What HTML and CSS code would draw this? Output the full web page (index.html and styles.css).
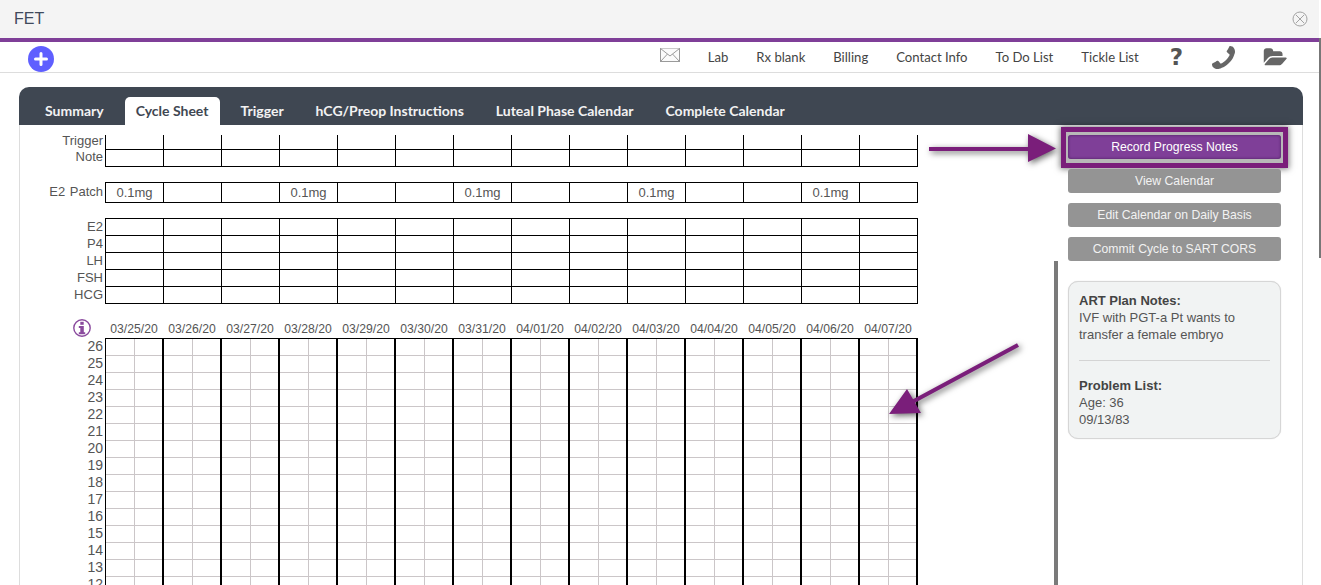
FILE: index.html
```html
<!DOCTYPE html>
<html lang="en">
<head>
<meta charset="utf-8">
<title>FET</title>
<link rel="stylesheet" href="styles.css">
</head>
<body>
<header class="titlebar">
  <h1 class="title">FET</h1>
  <svg class="close-icon" viewBox="0 0 16 16" width="16" height="16"><circle cx="8" cy="8" r="7" /><path d="M4 4l8 8M12 4l-8 8" /></svg>
</header>
<nav class="toolbar">
  <span class="add-btn"><svg viewBox="0 0 26 26" width="26" height="26"><circle cx="13" cy="13" r="13" class="add-bg"/><path d="M13 7.500v11M7.500 13h11" class="add-plus"/></svg></span>
  <div class="toolbar-links">
    <svg class="mail-icon" viewBox="0 0 20 14" width="20" height="14"><rect x="0.5" y="0.5" width="19" height="13"/><path d="M0.5 0.5L10 8l9.500-7.500M0.500 13.500L7.500 6M19.500 13.500L12.500 6"/></svg>
    <a class="tool-link">Lab</a>
    <a class="tool-link">Rx blank</a>
    <a class="tool-link">Billing</a>
    <a class="tool-link">Contact Info</a>
    <a class="tool-link">To Do List</a>
    <a class="tool-link">Tickle List</a>
    <span class="help">?</span>
    <svg class="phone-icon" viewBox="0 0 1408 1408" width="23" height="23"><path d="M1408 1112q0 27-10 70.500t-21 68.500q-21 50-122 106-94 51-186 51-27 0-53-3.500t-57.500-12.500-47-14.500-55.500-20.500-49-18q-98-35-175-83-127-79-264-216t-216-264q-48-77-83-175-3-9-18-49t-20.500-55.500-14.500-47-12.500-57.500-3.500-53q0-92 51-186 56-101 106-122 25-11 68.500-21t70.500-10q14 0 21 3 18 6 53 76 11 19 30 54t35 63.500 31 53.500q3 4 17.500 25t21.500 35.500 7 28.500q0 20-28.500 50t-62 55-62 53-28.500 46q0 9 5 22.500t8.500 20.500 14 24 11.500 19q76 137 174 235t235 174q2 1 19 11.500t24 14 20.500 8.500 22.500 5q18 0 46-28.500t53-62 55-62 50-28.500q14 0 28.500 7t35.500 21.500 25 17.500q25 15 53.500 31t63.500 35 54 30q70 35 76 53 3 7 3 21z"/></svg>
    <svg class="folder-icon" viewBox="0 0 2048 1536" width="25" height="19"><path d="M1943 824q0 31-31 66l-336 396q-43 51-120.500 86.500t-143.500 35.500h-1088q-34 0-60.500-13t-26.500-43q0-31 31-66l336-396q43-51 120.500-86.500t143.500-35.500h1088q34 0 60.500 13t26.500 43zm-343-344v160h-832q-94 0-197 47.500t-164 119.500l-337 396-5 6q0-4-.5-12.500t-.5-12.500v-960q0-92 66-158t158-66h320q92 0 158 66t66 158v32h544q92 0 158 66t66 158z"/></svg>
  </div>
</nav>
<span class="scroll-thumb"></span>
<main class="panel">
  <div class="tabs">
    <a class="tab">Summary</a>
    <a class="tab tab-active">Cycle Sheet</a>
    <a class="tab">Trigger</a>
    <a class="tab">hCG/Preop Instructions</a>
    <a class="tab">Luteal Phase Calendar</a>
    <a class="tab">Complete Calendar</a>
  </div>
  <div class="panel-body">
    <section class="sheet">
      <table class="cycle-table table-trigger">
        <tr class="row-short"><th>Trigger</th><td></td><td></td><td></td><td></td><td></td><td></td><td></td><td></td><td></td><td></td><td></td><td></td><td></td><td></td></tr>
        <tr><th>Note</th><td></td><td></td><td></td><td></td><td></td><td></td><td></td><td></td><td></td><td></td><td></td><td></td><td></td><td></td></tr>
      </table>
      <table class="cycle-table table-patch">
        <tr class="row-first row-tall"><th>E2 Patch</th><td>0.1mg</td><td></td><td></td><td>0.1mg</td><td></td><td></td><td>0.1mg</td><td></td><td></td><td>0.1mg</td><td></td><td></td><td>0.1mg</td><td></td></tr>
      </table>
      <table class="cycle-table table-labs">
        <tr class="row-first"><th>E2</th><td></td><td></td><td></td><td></td><td></td><td></td><td></td><td></td><td></td><td></td><td></td><td></td><td></td><td></td></tr>
        <tr><th>P4</th><td></td><td></td><td></td><td></td><td></td><td></td><td></td><td></td><td></td><td></td><td></td><td></td><td></td><td></td></tr>
        <tr><th>LH</th><td></td><td></td><td></td><td></td><td></td><td></td><td></td><td></td><td></td><td></td><td></td><td></td><td></td><td></td></tr>
        <tr><th>FSH</th><td></td><td></td><td></td><td></td><td></td><td></td><td></td><td></td><td></td><td></td><td></td><td></td><td></td><td></td></tr>
        <tr><th>HCG</th><td></td><td></td><td></td><td></td><td></td><td></td><td></td><td></td><td></td><td></td><td></td><td></td><td></td><td></td></tr>
      </table>
      <div class="chart">
        <div class="chart-corner">
          <svg class="info-icon" viewBox="0 0 18 18" width="18" height="18"><circle cx="9" cy="9" r="8.200"/><rect class="info-fill" x="7.300" y="2.800" width="3.400" height="3"/><path class="info-fill" d="M5.800 7h5v6.300H12.200V15.300H5.800v-2h1.500V9H5.800z"/></svg>
        </div>
        <div class="dates">
          <span>03/25/20</span><span>03/26/20</span><span>03/27/20</span><span>03/28/20</span><span>03/29/20</span><span>03/30/20</span><span>03/31/20</span><span>04/01/20</span><span>04/02/20</span><span>04/03/20</span><span>04/04/20</span><span>04/05/20</span><span>04/06/20</span><span>04/07/20</span>
        </div>
        <div class="ticks">
          <span>26</span><span>25</span><span>24</span><span>23</span><span>22</span><span>21</span><span>20</span><span>19</span><span>18</span><span>17</span><span>16</span><span>15</span><span>14</span><span>13</span><span>12</span>
        </div>
        <div class="plot"></div>
      </div>
    </section>
    <aside class="side">
      <div class="actions">
        <a class="action action-record">Record Progress Notes</a>
        <a class="action">View Calendar</a>
        <a class="action">Edit Calendar on Daily Basis</a>
        <a class="action">Commit Cycle to SART CORS</a>
      </div>
      <div class="notes">
        <div class="note-card">
          <p class="note-block"><strong>ART Plan Notes:</strong><br>IVF with PGT-a Pt wants to transfer a female embryo</p>
          <hr class="note-rule">
          <p class="note-block"><strong>Problem List:</strong><br>Age: 36<br>09/13/83</p>
        </div>
      </div>
    </aside>
    <svg class="callouts" viewBox="0 0 1284 498" width="1284" height="498">
      <path class="callout" d="M910 22H1009V9L1037 23.500 1009 37V26H910z"/>
      <path class="callout" d="M998 218.200L1000 221.800 896 277.800 902 288 870 289 888 264 894 274.200z"/>
    </svg>
  </div>
</main>
</body>
</html>
```
FILE: styles.css
```css
* { box-sizing: border-box; }
html, body { margin: 0; height: 585px; overflow: hidden; background: #fff; }
body { font-family: "Liberation Sans", Arial, sans-serif; color: #555; position: relative; }

.titlebar {
  height: 42px;
  background: #f4f4f4;
  border-bottom: 4px solid #7f3f98;
  display: flex;
  align-items: center;
  justify-content: space-between;
  padding: 0 11px 1px 14px;
  margin-right: 2px;
}
.title { margin: 1px 0 0; font-size: 16px; font-weight: 400; color: #3f4a5c; }
.close-icon circle, .close-icon path { fill: none; stroke: #a2a2a2; stroke-width: 1; }

.toolbar {
  height: 31px;
  border-bottom: 1px solid #ddd;
  display: flex;
  align-items: center;
  justify-content: space-between;
  padding: 0 33px 0 28px;
}
.add-btn { display: flex; margin-top: 3px; }
.add-bg { fill: #5f5fff; }
.add-plus { stroke: #fff; stroke-width: 3; stroke-linecap: round; fill: none; }
.toolbar-links { display: flex; align-items: center; gap: 28px; }
.tool-link { font-family: Lato, sans-serif; font-size: 13.1px; color: #444; }
.mail-icon { margin-bottom: 4px; }
.mail-icon rect, .mail-icon path { fill: #fafafa; stroke: #9a9a9a; stroke-width: 1; }
.help { font-family: "DejaVu Sans", sans-serif; font-weight: 700; font-size: 23px; color: #555; line-height: 24px; margin-left: 3px; }
.phone-icon { fill: #666; transform: scaleX(-1); margin-left: 1px; }
.folder-icon { fill: #666; }

.scroll-thumb { position: absolute; top: 38px; right: 0; width: 2px; height: 220px; background: #777; }

.panel { margin: 14px 18px 0 19px; }
.tabs {
  height: 38px;
  background: #3f4752;
  border-radius: 10px 10px 0 0;
  display: flex;
  align-items: flex-end;
  gap: 10px;
  padding-left: 15px;
}
.tab {
  height: 28px;
  padding: 0 11px 2px;
  display: flex;
  align-items: center;
  font-family: Lato, sans-serif;
  font-weight: 700;
  font-size: 14px;
  color: #f2f2f2;
  border-radius: 5px 5px 0 0;
}
.tab-active { background: #fff; color: #3f4752; }

.panel-body {
  position: relative;
  display: flex;
  height: 498px;
  padding: 10px 0 0 0;
  border-left: 1px solid #ddd;
  border-right: 1px solid #ddd;
}
.sheet { width: 1034px; flex: none; }

.cycle-table { border-spacing: 0; table-layout: fixed; width: 898px; font-size: 13px; }
.table-patch, .table-labs { margin-top: 15px; }
.cycle-table th { width: 85px; padding: 0 2px 0 0; font-weight: 400; text-align: right; line-height: 14px; vertical-align: top; }
.cycle-table td {
  width: 58px;
  height: 17px;
  padding: 0;
  border-left: 1px solid #000;
  border-bottom: 1px solid #000;
  text-align: center;
  line-height: 14px;
}
.cycle-table td:last-child { width: 59px; border-right: 1px solid #000; }
.row-short td { height: 15px; }
.row-short th { line-height: 12px; }
.table-labs th { padding-top: 1px; }
.row-first td { border-top: 1px solid #000; height: 18px; }
.table-labs .row-first th { padding-top: 2px; }
.row-tall td { height: 21px; }
.row-tall th { padding-top: 3px; word-spacing: 1px; }

.chart { display: grid; grid-template-columns: 85px 813px; grid-template-rows: 34px auto; }
.chart-corner { display: flex; justify-content: flex-end; align-items: flex-end; padding: 0 14px 1px 0; }
.info-icon circle { fill: none; stroke: #8a4a9e; stroke-width: 1.400; }
.info-fill { fill: #8a4a9e; }
.dates { display: grid; grid-template-columns: repeat(14, 58px); align-items: end; font-size: 12.2px; text-align: center; line-height: 14px; padding: 0 0 2px 0; }
.ticks { display: flex; flex-direction: column; text-align: right; font-size: 14px; padding-right: 2px; }
.ticks span { height: 17px; line-height: 17px; }
.plot {
  background-image:
    linear-gradient(#000 1px, transparent 1px),
    linear-gradient(90deg, #000 2px, transparent 2px),
    linear-gradient(90deg, transparent 29px, #cbc6c8 29px, #cbc6c8 30px, transparent 30px),
    linear-gradient(0deg, #cbc6c8 1px, transparent 1px);
  background-size: 100% 100%, 58px 100%, 58px 100%, 100% 17px;
  background-position: 0 0, -1px 0, 0 0, 0 1px;
}

.side { flex: 1; display: flex; flex-direction: column; isolation: isolate; }
.actions { display: flex; flex-direction: column; gap: 10px; padding-left: 14px; }
.action {
  position: relative;
  width: 213px;
  height: 24px;
  border-radius: 3px;
  background: #949494;
  color: #f2f2f2;
  font-size: 12.2px;
  line-height: 24px;
  text-align: center;
}
.action-record { background: #7f3f98; color: #fff; box-shadow: inset 0 0 3px #4a1a5e; }
.action-record::before {
  content: "";
  position: absolute;
  inset: -8px -7px -9px -7px;
  z-index: -1;
  border: 5px solid #7a1e7a;
  background: #b8b8b8;
  box-shadow: 0 0 6px 1px rgba(0, 0, 0, .5);
}
.notes { flex: 1; border-left: 4px solid #7a7a7a; padding: 20px 0 0 10px; }
.note-card {
  width: 213px;
  height: 158px;
  padding: 10px;
  background: #f1f3f3;
  border: 1px solid #d6d6d6;
  border-radius: 10px;
  font-size: 13px;
  line-height: 17px;
  color: #555;
  box-shadow: 0 0 1px #ccc;
}
.note-block { margin: 0; }
.note-rule { margin: 17px 0 16px; border: 0; border-top: 1px solid #d4d4d4; }
.note-block strong { color: #444; }

.callouts { position: absolute; left: -1px; top: 0; pointer-events: none; overflow: visible; }
.callout { fill: #7a1e7a; filter: drop-shadow(2px 2px 3px rgba(0, 0, 0, .6)); }
```
